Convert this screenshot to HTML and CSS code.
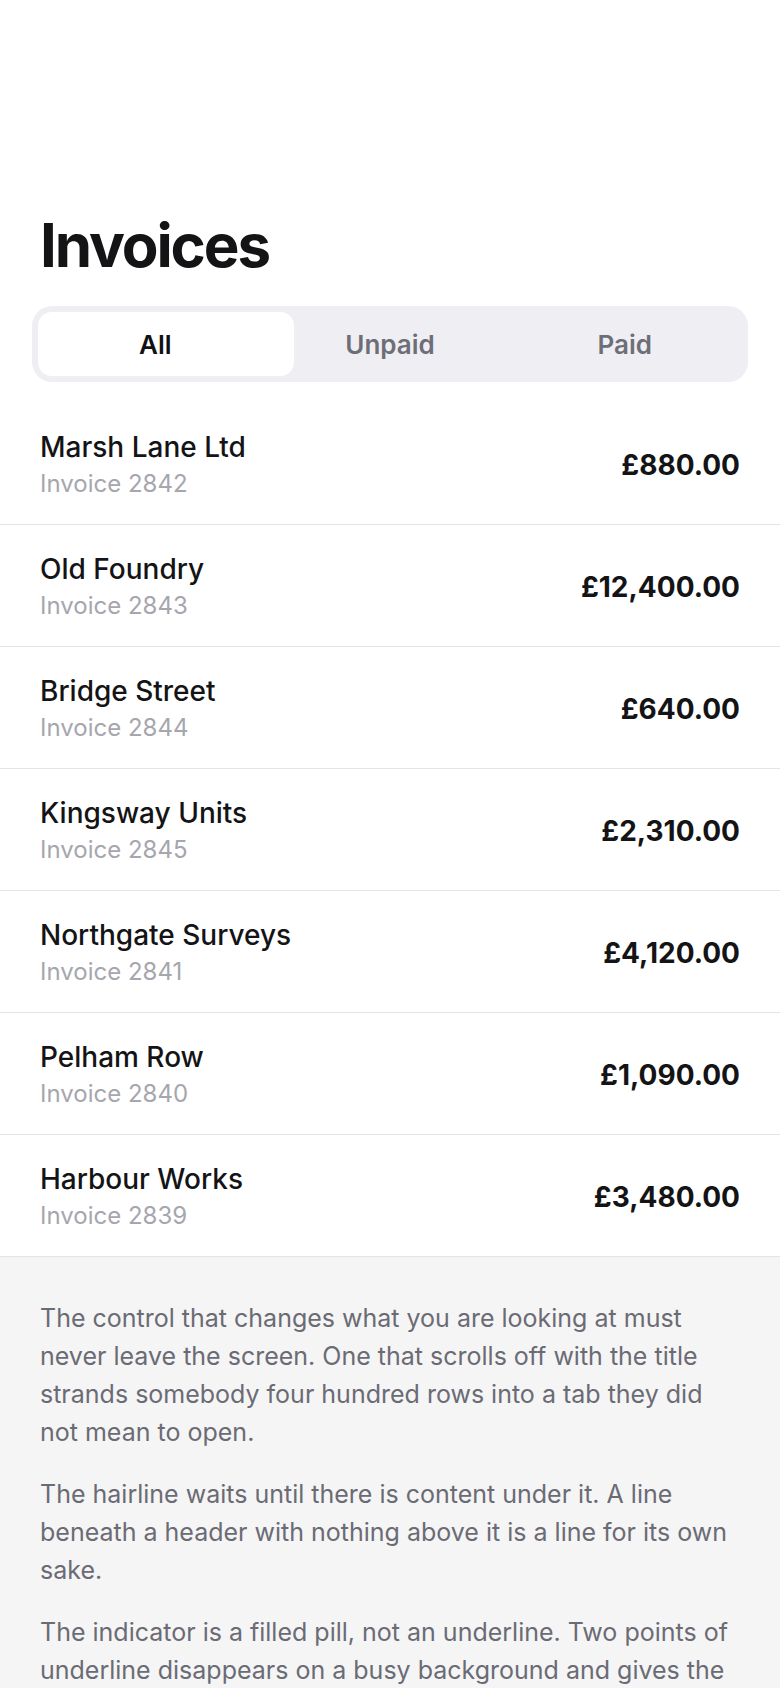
FILE: index.html
```html
<!DOCTYPE html>
<html lang="en">
<head>
    <meta charset="UTF-8">
    <meta name="viewport" content="width=device-width, initial-scale=1.0">
    <title>Invoices</title>
    <link rel="stylesheet" href="styles.css">
</head>
<body>
    <!-- Title + filter -->
    <header class="top">
        <h1 class="title">Invoices</h1>
        <div class="segments">
            <span class="pill"></span>
            <button class="seg active">All</button>
            <button class="seg">Unpaid</button>
            <button class="seg">Paid</button>
        </div>
    </header>

    <!-- Invoice list -->
    <ul class="invoices">
        <li class="row">
            <div class="who">
                <p class="name">Marsh Lane Ltd</p>
                <p class="ref">Invoice 2842</p>
            </div>
            <p class="amount">£880.00</p>
        </li>
        <li class="row">
            <div class="who">
                <p class="name">Old Foundry</p>
                <p class="ref">Invoice 2843</p>
            </div>
            <p class="amount">£12,400.00</p>
        </li>
        <li class="row">
            <div class="who">
                <p class="name">Bridge Street</p>
                <p class="ref">Invoice 2844</p>
            </div>
            <p class="amount">£640.00</p>
        </li>
        <li class="row">
            <div class="who">
                <p class="name">Kingsway Units</p>
                <p class="ref">Invoice 2845</p>
            </div>
            <p class="amount">£2,310.00</p>
        </li>
        <li class="row">
            <div class="who">
                <p class="name">Northgate Surveys</p>
                <p class="ref">Invoice 2841</p>
            </div>
            <p class="amount">£4,120.00</p>
        </li>
        <li class="row">
            <div class="who">
                <p class="name">Pelham Row</p>
                <p class="ref">Invoice 2840</p>
            </div>
            <p class="amount">£1,090.00</p>
        </li>
        <li class="row">
            <div class="who">
                <p class="name">Harbour Works</p>
                <p class="ref">Invoice 2839</p>
            </div>
            <p class="amount">£3,480.00</p>
        </li>
    </ul>

    <!-- Notes -->
    <section class="notes">
        <p>The control that changes what you are looking at must never leave the screen. One that scrolls off with the title strands somebody four hundred rows into a tab they did not mean to open.</p>
        <p>The hairline waits until there is content under it. A line beneath a header with nothing above it is a line for its own sake.</p>
        <p>The indicator is a filled pill, not an underline. Two points of underline disappears on a busy background and gives the eye nothing to hold on to when the list moves under it.</p>
    </section>
</body>
</html>
```

FILE: styles.css
```css
* {
    box-sizing: border-box;
    margin: 0;
    padding: 0;
}
body {
    background-color: #fff;
    font-family: 'Inter', 'Noto Sans', sans-serif;
    color: #141416;
}
.top {
    padding: 212px 32px 21px;
}
.title {
    font-size: 60px;
    line-height: 1.1;
    font-weight: 700;
    letter-spacing: -0.035em;
    margin: 0 0 28px 8px;
}
.segments {
    position: relative;
    display: grid;
    grid-template-columns: 1fr 1fr 1fr;
    padding: 6px;
    background-color: #efeff3;
    border-radius: 20px;
}
.pill {
    position: absolute;
    top: 6px;
    left: 6px;
    width: 256px;
    height: 64px;
    background-color: #fff;
    border-radius: 14px;
}
.seg {
    position: relative;
    height: 64px;
    border: none;
    background: none;
    font-family: inherit;
    font-size: 26px;
    font-weight: 600;
    color: #6e6e78;
    cursor: pointer;
}
.seg.active {
    color: #111113;
}
.invoices {
    list-style: none;
}
.row {
    display: flex;
    align-items: center;
    justify-content: space-between;
    height: 122px;
    padding: 3px 40px 0 40px;
    border-bottom: 1px solid #e4e4e7;
}
.name {
    font-size: 28px;
    font-weight: 500;
    line-height: 36px;
    color: #141416;
}
.ref {
    font-size: 24px;
    line-height: 37px;
    color: #a6a6ae;
}
.amount {
    font-size: 28px;
    font-weight: 700;
    color: #141416;
}
.notes {
    background-color: #f5f5f6;
    padding: 42px 40px 60px;
    color: #6b6b74;
    font-size: 25px;
    line-height: 38px;
}
.notes p {
    margin-bottom: 24px;
}
```
